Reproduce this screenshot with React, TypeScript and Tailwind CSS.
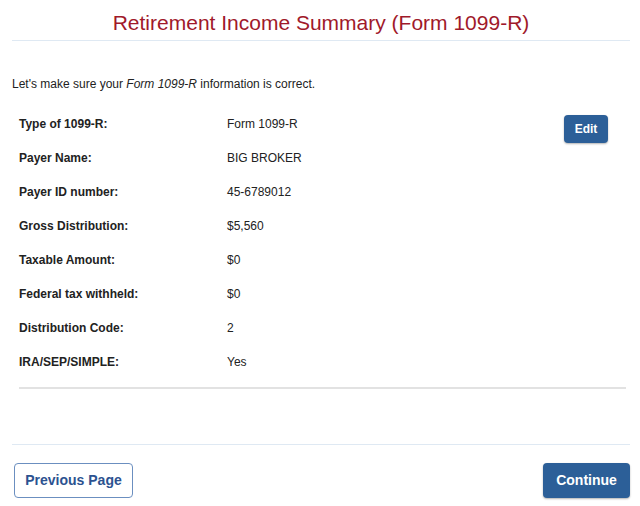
import React from "react";

const rows: [string, string][] = [
  ["Type of 1099-R:", "Form 1099-R"],
  ["Payer Name:", "BIG BROKER"],
  ["Payer ID number:", "45-6789012"],
  ["Gross Distribution:", "$5,560"],
  ["Taxable Amount:", "$0"],
  ["Federal tax withheld:", "$0"],
  ["Distribution Code:", "2"],
  ["IRA/SEP/SIMPLE:", "Yes"],
];

export default function App() {
  return (
    <div
      className="w-[640px] h-[506px] bg-white text-[#222] overflow-hidden"
      style={{ fontFamily: '"Liberation Sans", Arial, sans-serif' }}
    >
      <div className="pl-3 pr-[10px]">
        <h1 className="pt-[10px] h-[40px] text-center text-[21px] leading-[26px] text-[#a0192a]">
          Retirement Income Summary (Form 1099-R)
        </h1>
        <div className="h-px bg-[#dfe9f3]" />
        <p className="mt-[36px] text-[12px] leading-[14px]">
          Let's make sure your <i>Form 1099-R</i> information is correct.
        </p>
        <div className="mt-[26px] pl-[7px] pr-[4px]">
          {rows.map(([label, value], i) => (
            <div key={i} className="flex h-[34px] items-start text-[12px] leading-[14px]">
              <div className="w-[208px] font-bold">{label}</div>
              <div className="flex-1">{value}</div>
              {i === 0 && (
                <button className="-mt-[2px] mr-[18px] w-[44px] h-[28px] rounded-[4px] bg-[#2c5f98] text-white font-bold text-[12px] shadow-[0_1px_2px_rgba(0,0,0,0.3)]">
                  Edit
                </button>
              )}
            </div>
          ))}
          <div className="-mt-[2px] h-[2px] bg-[#e2e2e2]" />
        </div>
        <div className="mt-[55px] h-px bg-[#dfe9f3]" />
        <div className="mt-[18px] flex justify-between pl-[2px]">
          <button className="w-[119px] h-[35px] rounded-[4px] border border-[#6b8fc0] bg-white text-[#2c5290] font-bold text-[14px]">
            Previous Page
          </button>
          <button className="w-[87px] h-[35px] rounded-[4px] bg-[#2c5f98] text-white font-bold text-[14px] shadow-[0_1px_2px_rgba(0,0,0,0.3)]">
            Continue
          </button>
        </div>
      </div>
    </div>
  );
}
